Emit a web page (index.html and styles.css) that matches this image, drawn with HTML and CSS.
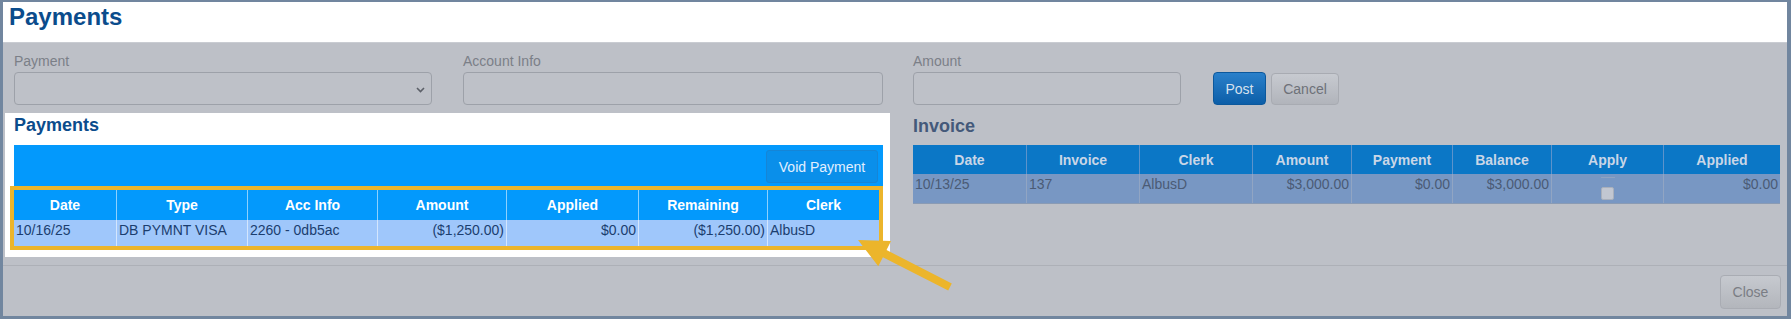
FILE: index.html
```html
<!DOCTYPE html>
<html lang="en">
<head>
<meta charset="utf-8">
<title>Payments</title>
<link rel="stylesheet" href="styles.css">
</head>
<body>
<div class="frame">
  <header class="top"><h1 class="title">Payments</h1></header>
  <div class="content">
    <div class="main">
      <div class="left">
        <div class="fields">
          <div class="field f-payment">
            <label class="lbl">Payment</label>
            <div class="box select">
              <svg class="chev" width="9" height="6" viewBox="0 0 9 6"><path d="M1 1 L4.5 4.5 L8 1" fill="none" stroke="#5c6068" stroke-width="1.6"/></svg>
            </div>
          </div>
          <div class="field f-account">
            <label class="lbl">Account Info</label>
            <div class="box"></div>
          </div>
        </div>
        <section class="panel">
          <h2 class="sub">Payments</h2>
          <div class="toolbar"><button class="void">Void Payment</button></div>
          <div class="ptable">
            <div class="prow phead">
              <div class="c">Date</div><div class="c">Type</div><div class="c">Acc Info</div><div class="c">Amount</div><div class="c">Applied</div><div class="c">Remaining</div><div class="c">Clerk</div>
            </div>
            <div class="prow pdata">
              <div class="c">10/16/25</div><div class="c">DB PYMNT VISA</div><div class="c">2260 - 0db5ac</div><div class="c r">($1,250.00)</div><div class="c r">$0.00</div><div class="c r">($1,250.00)</div><div class="c">AlbusD</div>
            </div>
          </div>
        </section>
      </div>
      <div class="right">
        <div class="fields">
          <div class="field f-amount">
            <label class="lbl">Amount</label>
            <div class="box"></div>
          </div>
          <button class="btn post">Post</button>
          <button class="btn cancel">Cancel</button>
        </div>
        <h2 class="sub inv">Invoice</h2>
        <div class="itable">
          <div class="irow ihead">
            <div class="c">Date</div><div class="c">Invoice</div><div class="c">Clerk</div><div class="c">Amount</div><div class="c">Payment</div><div class="c">Balance</div><div class="c">Apply</div><div class="c">Applied</div>
          </div>
          <div class="irow idata">
            <div class="c">10/13/25</div><div class="c">137</div><div class="c">AlbusD</div><div class="c r">$3,000.00</div><div class="c r">$0.00</div><div class="c r">$3,000.00</div><div class="c apply"><span class="dash"></span><span class="chk"></span></div><div class="c r">$0.00</div>
          </div>
        </div>
      </div>
    </div>
    <div class="footer"><button class="btn close">Close</button></div>
  </div>
</div>
<svg class="arrow" width="1791" height="319" viewBox="0 0 1791 319">
  <polygon points="858,240 891,241 886.5,250 951.8,283.4 948.2,290.6 882.9,257.3 878.3,266.2" fill="#ecb52b"/>
</svg>
</body>
</html>
```

FILE: styles.css
```css
* { box-sizing: border-box; }
html, body { margin: 0; padding: 0; }
body {
  width: 1791px;
  height: 319px;
  overflow: hidden;
  position: relative;
  font-family: "Liberation Sans", Arial, Helvetica, sans-serif;
  font-size: 14px;
  background: #71869f;
}
.frame {
  width: 1791px;
  height: 319px;
  border-style: solid;
  border-color: #71869f;
  border-width: 2px 4px 3px 3px;
  background: #bdc0c7;
  display: flex;
  flex-direction: column;
}
.top {
  height: 41px;
  background: #ffffff;
  padding: 0 6px;
  border-bottom: 1px solid #c9ccd2;
}
.title {
  margin: 0;
  font-size: 24px;
  line-height: 29px;
  font-weight: bold;
  color: #0b4c8c;
}
.content {
  padding-top: 10px;
  display: flex;
  flex-direction: column;
}
.main { display: flex; }
.left { width: 885px; margin-left: 2px; }
.right { width: 868px; margin-left: 23px; }
.fields { display: flex; align-items: flex-end; }
.left .fields { padding-left: 9px; gap: 31px; }
.field { display: flex; flex-direction: column; }
.f-payment { width: 418px; }
.f-account { width: 420px; }
.f-amount { width: 268px; }
.lbl {
  font-size: 14px;
  line-height: 16px;
  color: #7b7f87;
  margin-bottom: 3px;
}
.box {
  height: 33px;
  border: 1px solid #9da1a9;
  border-radius: 4px;
  background: #bec1c8;
}
.select {
  display: flex;
  align-items: center;
  justify-content: flex-end;
  padding-right: 6px;
}
.chev { display: block; margin-top: 2px; }
.btn {
  font-family: inherit;
  font-size: 14px;
  border-radius: 4px;
  padding: 0;
  margin: 0;
}
.post {
  width: 53px;
  height: 33px;
  margin-left: 32px;
  background: linear-gradient(#2a80ca, #0c5ea8);
  border: 1px solid #0c589c;
  color: #d6e1ee;
}
.cancel {
  width: 68px;
  height: 32px;
  margin-left: 5px;
  background: linear-gradient(#c7cad0, #b1b4bb);
  border: 1px solid #a8abb2;
  color: #6e7178;
}
.panel {
  margin-top: 8px;
  background: #ffffff;
  padding: 1px 7px 11px 9px;
}
.sub {
  margin: 0;
  font-size: 18px;
  line-height: 22px;
  font-weight: bold;
  color: #0b4c8c;
}
.toolbar {
  margin-top: 9px;
  height: 41px;
  background: #0399fc;
  display: flex;
  justify-content: flex-end;
  padding: 5px 5px 3px 0;
}
.void {
  width: 112px;
  height: 33px;
  font-family: inherit;
  font-size: 14px;
  color: #e2efff;
  background: #0a8fea;
  border: 1px solid #1685d6;
  border-radius: 3px;
  padding: 0;
}
.ptable {
  margin-top: 4px;
  width: 865px;
  outline: 4px solid #ecb52b;
}
.prow {
  display: grid;
  grid-template-columns: 102px 131px 130px 129px 132px 129px 112px;
}
.c { padding: 0 2px; white-space: nowrap; }
.prow .c + .c { border-left: 1px solid rgba(255,255,255,0.55); }
.phead {
  height: 30px;
  background: #0399fc;
  color: #ffffff;
  font-weight: bold;
}
.phead .c {
  display: flex;
  align-items: center;
  justify-content: center;
}
.pdata {
  height: 26px;
  background: #9fc7fb;
  color: #1b3e6f;
}
.pdata .c, .idata .c { padding-top: 2px; line-height: 16px; }
.r { text-align: right; }
.inv { margin-top: 10px; color: #44597a; }
.itable {
  margin-top: 8px;
  width: 867px;
}
.irow {
  display: grid;
  grid-template-columns: 113px 113px 113px 99px 101px 99px 112px 117px;
}
.ihead {
  height: 29px;
  background: #0b77c6;
  color: #c9d6e7;
  font-weight: bold;
}
.ihead .c {
  display: flex;
  align-items: center;
  justify-content: center;
}
.ihead .c + .c { border-left: 1px solid #5c93cb; }
.idata {
  height: 30px;
  background: #7897c3;
  color: #4b5b75;
  border-bottom: 1px solid #8a9bb4;
}
.idata .c + .c { border-left: 1px solid #91a5c3; }
.apply {
  display: flex;
  flex-direction: column;
  align-items: center;
}
.dash {
  display: block;
  width: 14px;
  height: 1px;
  margin-top: 1px;
  background: #8fa3c2;
}
.chk {
  display: block;
  width: 13px;
  height: 13px;
  margin-top: 9px;
  background: #c2c7d1;
  border: 1px solid #a9b0bc;
  border-radius: 2px;
}
.footer {
  margin-top: 8px;
  border-top: 1px solid #adb0b7;
  padding: 9px 6px 0 0;
  display: flex;
  justify-content: flex-end;
}
.close {
  width: 61px;
  height: 34px;
  background: linear-gradient(#c6c9cf, #b3b6bc);
  border: 1px solid #a9acb3;
  color: #7a7d84;
}
.arrow {
  position: absolute;
  left: 0;
  top: 0;
  pointer-events: none;
}
```
